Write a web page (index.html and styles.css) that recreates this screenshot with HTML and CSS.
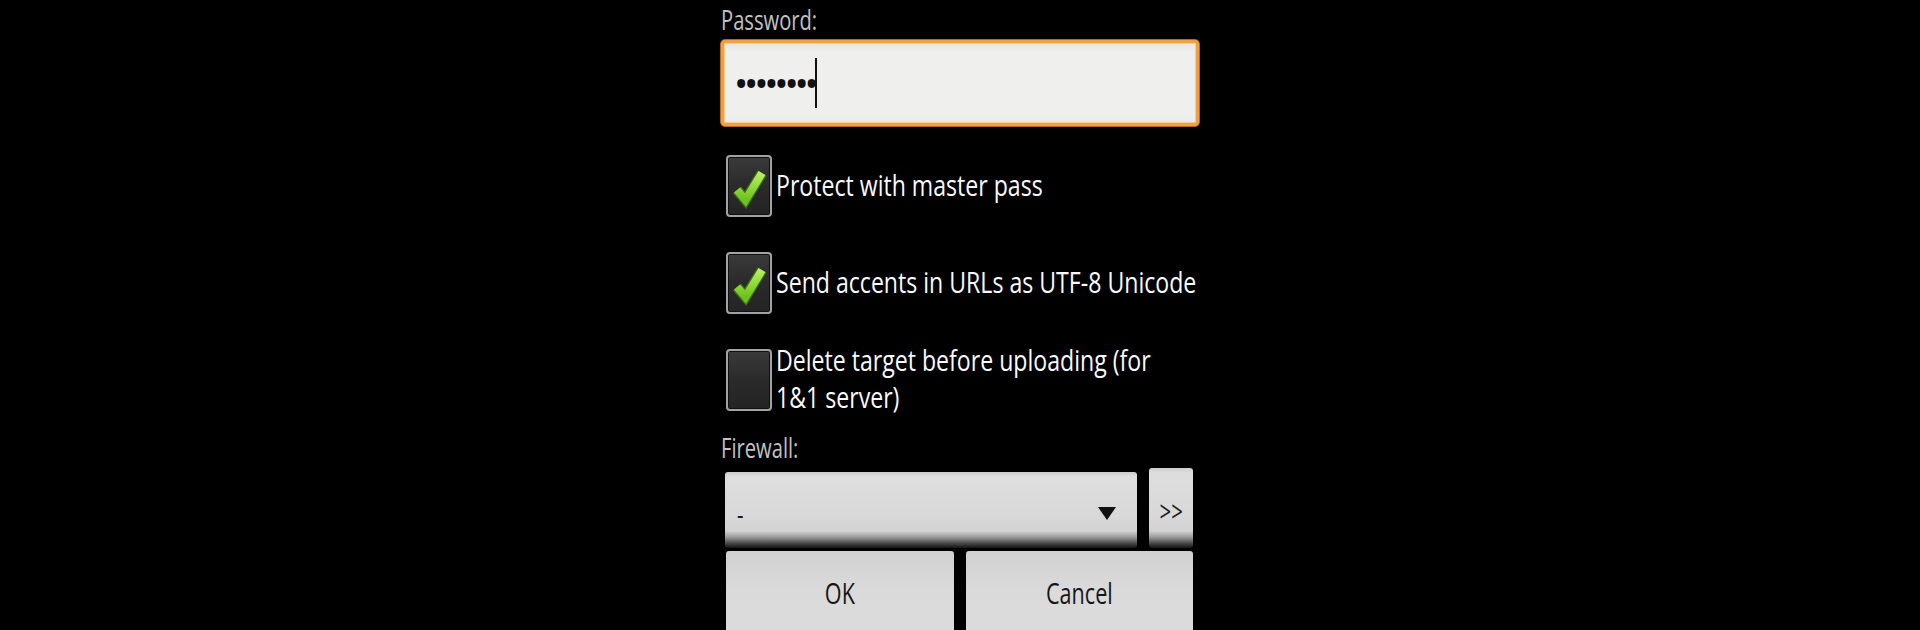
FILE: index.html
```html
<!DOCTYPE html>
<html lang="en">
<head>
<meta charset="utf-8">
<title>FTP settings</title>
<link rel="stylesheet" href="styles.css">
</head>
<body>
<main class="form">
  <div class="label"><span>Password:</span></div>
  <div class="input">
    <span class="dots">••••••••</span><span class="caret"></span>
  </div>
  <div class="checks">
    <div class="check-row">
      <div class="box checked">
        <svg viewBox="0 0 42 58" width="42" height="58" aria-hidden="true">
          <defs>
            <linearGradient id="g1" x1="0" y1="0" x2="0" y2="1">
              <stop offset="0" stop-color="#b8f060"/>
              <stop offset="1" stop-color="#6cc21e"/>
            </linearGradient>
          </defs>
          <path d="M9 33 L17.5 43 L34 16" fill="none" stroke="#3d6e12" stroke-width="10.5" stroke-linejoin="miter"/>
          <path d="M9 33 L17.5 43 L34 16" fill="none" stroke="url(#g1)" stroke-width="8" stroke-linejoin="miter"/>
        </svg>
      </div>
      <div class="check-text"><span>Protect with master pass</span></div>
    </div>
    <div class="check-row">
      <div class="box checked">
        <svg viewBox="0 0 42 58" width="42" height="58" aria-hidden="true">
          <defs>
            <linearGradient id="g2" x1="0" y1="0" x2="0" y2="1">
              <stop offset="0" stop-color="#b8f060"/>
              <stop offset="1" stop-color="#6cc21e"/>
            </linearGradient>
          </defs>
          <path d="M9 33 L17.5 43 L34 16" fill="none" stroke="#3d6e12" stroke-width="10.5" stroke-linejoin="miter"/>
          <path d="M9 33 L17.5 43 L34 16" fill="none" stroke="url(#g2)" stroke-width="8" stroke-linejoin="miter"/>
        </svg>
      </div>
      <div class="check-text"><span>Send accents in URLs as UTF-8 Unicode</span></div>
    </div>
    <div class="check-row">
      <div class="box"></div>
      <div class="check-text"><span>Delete target before uploading (for<br>1&amp;1 server)</span></div>
    </div>
  </div>
  <div class="label fw"><span>Firewall:</span></div>
  <div class="spinner-row">
    <div class="spinner">
      <span class="value"><span>-</span></span>
      <svg class="arrow" viewBox="0 0 18 13" width="18" height="13" aria-hidden="true"><polygon points="0,0 18,0 9,13" fill="#111"/></svg>
    </div>
    <div class="more"><span>&gt;&gt;</span></div>
  </div>
  <div class="buttons">
    <div class="btn ok"><span>OK</span></div>
    <div class="btn cancel"><span>Cancel</span></div>
  </div>
</main>
</body>
</html>
```

FILE: styles.css
```css
html, body {
  margin: 0;
  height: 630px;
  overflow: hidden;
  background: #000;
}
body {
  font-family: "Open Sans", "DejaVu Sans", sans-serif;
}
.form {
  width: 480px;
  margin: 0 auto;
  display: flex;
  flex-direction: column;
}
.label {
  height: 38px;
  font-size: 28px;
  line-height: 38px;
  color: #c2c2c2;
  padding-left: 1px;
  white-space: nowrap;
}
.label span {
  display: inline-block;
  transform: scaleX(0.72);
  transform-origin: 0 50%;
}
.input {
  margin-top: 1px;
  height: 88px;
  box-sizing: border-box;
  border: 1px solid #b8671f;
  border-radius: 5px;
  background: linear-gradient(#e2e2e0, #efefed 14%, #efefed 88%, #e6e6e4);
  box-shadow: inset 0 0 0 3px #f0a040, inset 0 0 0 4px #f7cc90;
  display: flex;
  align-items: center;
  padding-left: 13px;
}
.dots {
  font-family: "Open Sans", sans-serif;
  font-size: 38px;
  line-height: 1;
  color: #111;
  letter-spacing: -4.2px;
}
.caret {
  display: inline-block;
  width: 2px;
  height: 50px;
  background: #111;
  margin-left: 0;
}
.checks {
  margin-top: 28px;
  display: flex;
  flex-direction: column;
  gap: 35px;
}
.check-row {
  height: 62px;
  display: flex;
  align-items: center;
  padding-left: 6px;
}
.box {
  flex: none;
  width: 46px;
  height: 62px;
  box-sizing: border-box;
  border: 2px solid #a2a2a2;
  border-radius: 4px;
  background: linear-gradient(#3a3a3a, #2a2a2a 50%, #242424);
  box-shadow: inset 0 0 0 1px #101010;
  display: flex;
}
.box svg {
  display: block;
}
.check-text {
  flex: none;
  width: 420px;
  margin-left: 4px;
  font-size: 29.5px;
  line-height: 37px;
  color: #fafafa;
  padding-bottom: 4px;
}
.check-text span {
  display: inline-block;
  white-space: nowrap;
  transform: scaleX(0.783);
  transform-origin: 0 50%;
}
.fw {
  margin-top: 17px;
}
.spinner-row {
  margin-top: 2px;
  height: 80px;
  display: flex;
  gap: 12px;
  padding-left: 5px;
}
.spinner,
.more {
  box-sizing: border-box;
  border-radius: 3px;
  background: linear-gradient(to bottom,
    #cdcdcd 0,
    #dedede 5px,
    #d8d8d8 60%,
    #d2d2d2 calc(100% - 17px),
    #9c9c9c calc(100% - 11px),
    #404040 calc(100% - 4px),
    #141414 100%);
}
.spinner {
  margin-top: 4px;
  width: 412px;
  height: 76px;
  display: flex;
  align-items: center;
  padding: 6px 21px 0 12px;
}
.value {
  flex: 1;
  font-size: 28px;
  color: #1c1c1c;
}
.value span {
  display: inline-block;
  transform: scaleX(0.72);
  transform-origin: 0 50%;
}
.arrow {
  flex: none;
  display: block;
}
.more {
  width: 44px;
  height: 80px;
  display: flex;
  align-items: center;
  justify-content: center;
  padding-top: 4px;
  font-size: 30px;
  color: #1c1c1c;
}
.more span {
  display: inline-block;
  transform: scaleX(0.68);
}
.buttons {
  margin-top: 3px;
  display: flex;
  gap: 12px;
  padding-left: 6px;
}
.btn {
  height: 96px;
  box-sizing: border-box;
  border-radius: 3px;
  background: linear-gradient(#d0d0d0, #dadada 40%, #dcdcdc);
  display: flex;
  justify-content: center;
  align-items: flex-start;
  padding-top: 22px;
  font-size: 30px;
  line-height: 40px;
  color: #161616;
}
.ok {
  width: 228px;
}
.cancel {
  width: 227px;
}
.btn span {
  display: inline-block;
  transform: scaleX(0.72);
}
```
